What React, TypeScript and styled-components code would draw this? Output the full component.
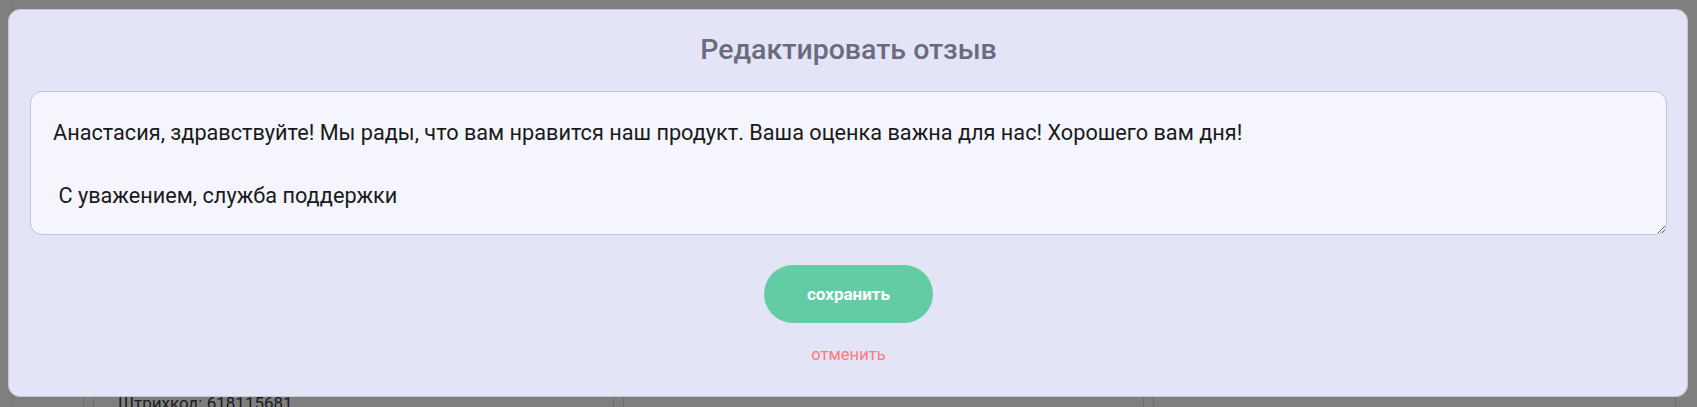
import React from "react";
import styled, { createGlobalStyle } from "styled-components";

const GlobalStyle = createGlobalStyle`
  html, body {
    margin: 0;
    padding: 0;
    background: #ffffff;
    font-family: Roboto, "Liberation Sans", sans-serif;
  }
  * {
    box-sizing: border-box;
  }
`;

const columns = [
  { barcode: "618115681" },
  { barcode: "" },
  { barcode: "" },
];

export default function App() {
  return (
    <React.Fragment>
      <GlobalStyle />
      <Board>
        <Columns>
          {columns.map((c, i) => (
            <Column key={i}>
              <InfoBox>{c.barcode && <span>Штрихкод: {c.barcode}</span>}</InfoBox>
            </Column>
          ))}
        </Columns>
      </Board>

      <Overlay>
        <Modal>
          <Title>Редактировать отзыв</Title>
          <Editor
            defaultValue={
              "Анастасия, здравствуйте! Мы рады, что вам нравится наш продукт. Ваша оценка важна для нас! Хорошего вам дня!\n\n С уважением, служба поддержки"
            }
          />
          <SaveButton>сохранить</SaveButton>
          <CancelButton>отменить</CancelButton>
        </Modal>
      </Overlay>
    </React.Fragment>
  );
}

const Board = styled.div`
  margin-left: 12px;
  width: 1665px;
  height: 407px;
  overflow: hidden;
  border-left: 1px solid #e6e6f2;
  padding: 380px 0 0 70px;
`;

const Columns = styled.div`
  display: grid;
  grid-template-columns: 530px 530px 533px;
  height: 100%;
`;

const Column = styled.div`
  border-left: 1px solid #d6d6ea;
  padding-left: 9px;
  &:last-child {
    border-right: 1px solid #d6d6ea;
  }
`;

const InfoBox = styled.div`
  height: 100%;
  border-left: 1px solid #d6d6ea;
  padding: 12px 0 0 24px;
  font-size: 17px;
  line-height: 22px;
  color: #3a3a3a;
`;

const Overlay = styled.div`
  position: fixed;
  inset: 0;
  background: rgba(0, 0, 0, 0.5);
  display: flex;
  align-items: flex-start;
  padding: 9px 9px 0 8px;
`;

const Modal = styled.div`
  width: 100%;
  height: 388px;
  background: #e3e4f6;
  border: 1px solid #c4c5dc;
  border-radius: 12px;
  padding: 23px 20px 0 21px;
  display: flex;
  flex-direction: column;
  align-items: center;
`;

const Title = styled.h2`
  margin: 0;
  font-size: 28.5px;
  line-height: 34px;
  font-weight: 500;
  color: #6b6b80;
`;

const Editor = styled.textarea`
  width: 100%;
  height: 144px;
  margin-top: 24px;
  padding: 25px 21px 0 22px;
  border: 1px solid #c3c3dc;
  border-radius: 12px;
  background: #f5f5fd;
  font-family: Roboto, "Liberation Sans", sans-serif;
  font-size: 21.7px;
  line-height: 31.4px;
  color: #1a1a1a;
  outline: none;
`;

const SaveButton = styled.button`
  margin-top: 30px;
  width: 169px;
  height: 58px;
  border: none;
  border-radius: 29px;
  background: #62cda5;
  color: #ffffff;
  font-family: Roboto, "Liberation Sans", sans-serif;
  font-size: 17px;
  font-weight: 700;
  cursor: pointer;
`;

const CancelButton = styled.button`
  margin-top: 21px;
  padding: 0;
  border: none;
  background: none;
  color: #ff7a7a;
  font-family: Roboto, "Liberation Sans", sans-serif;
  font-size: 16.6px;
  line-height: 22px;
  cursor: pointer;
`;
